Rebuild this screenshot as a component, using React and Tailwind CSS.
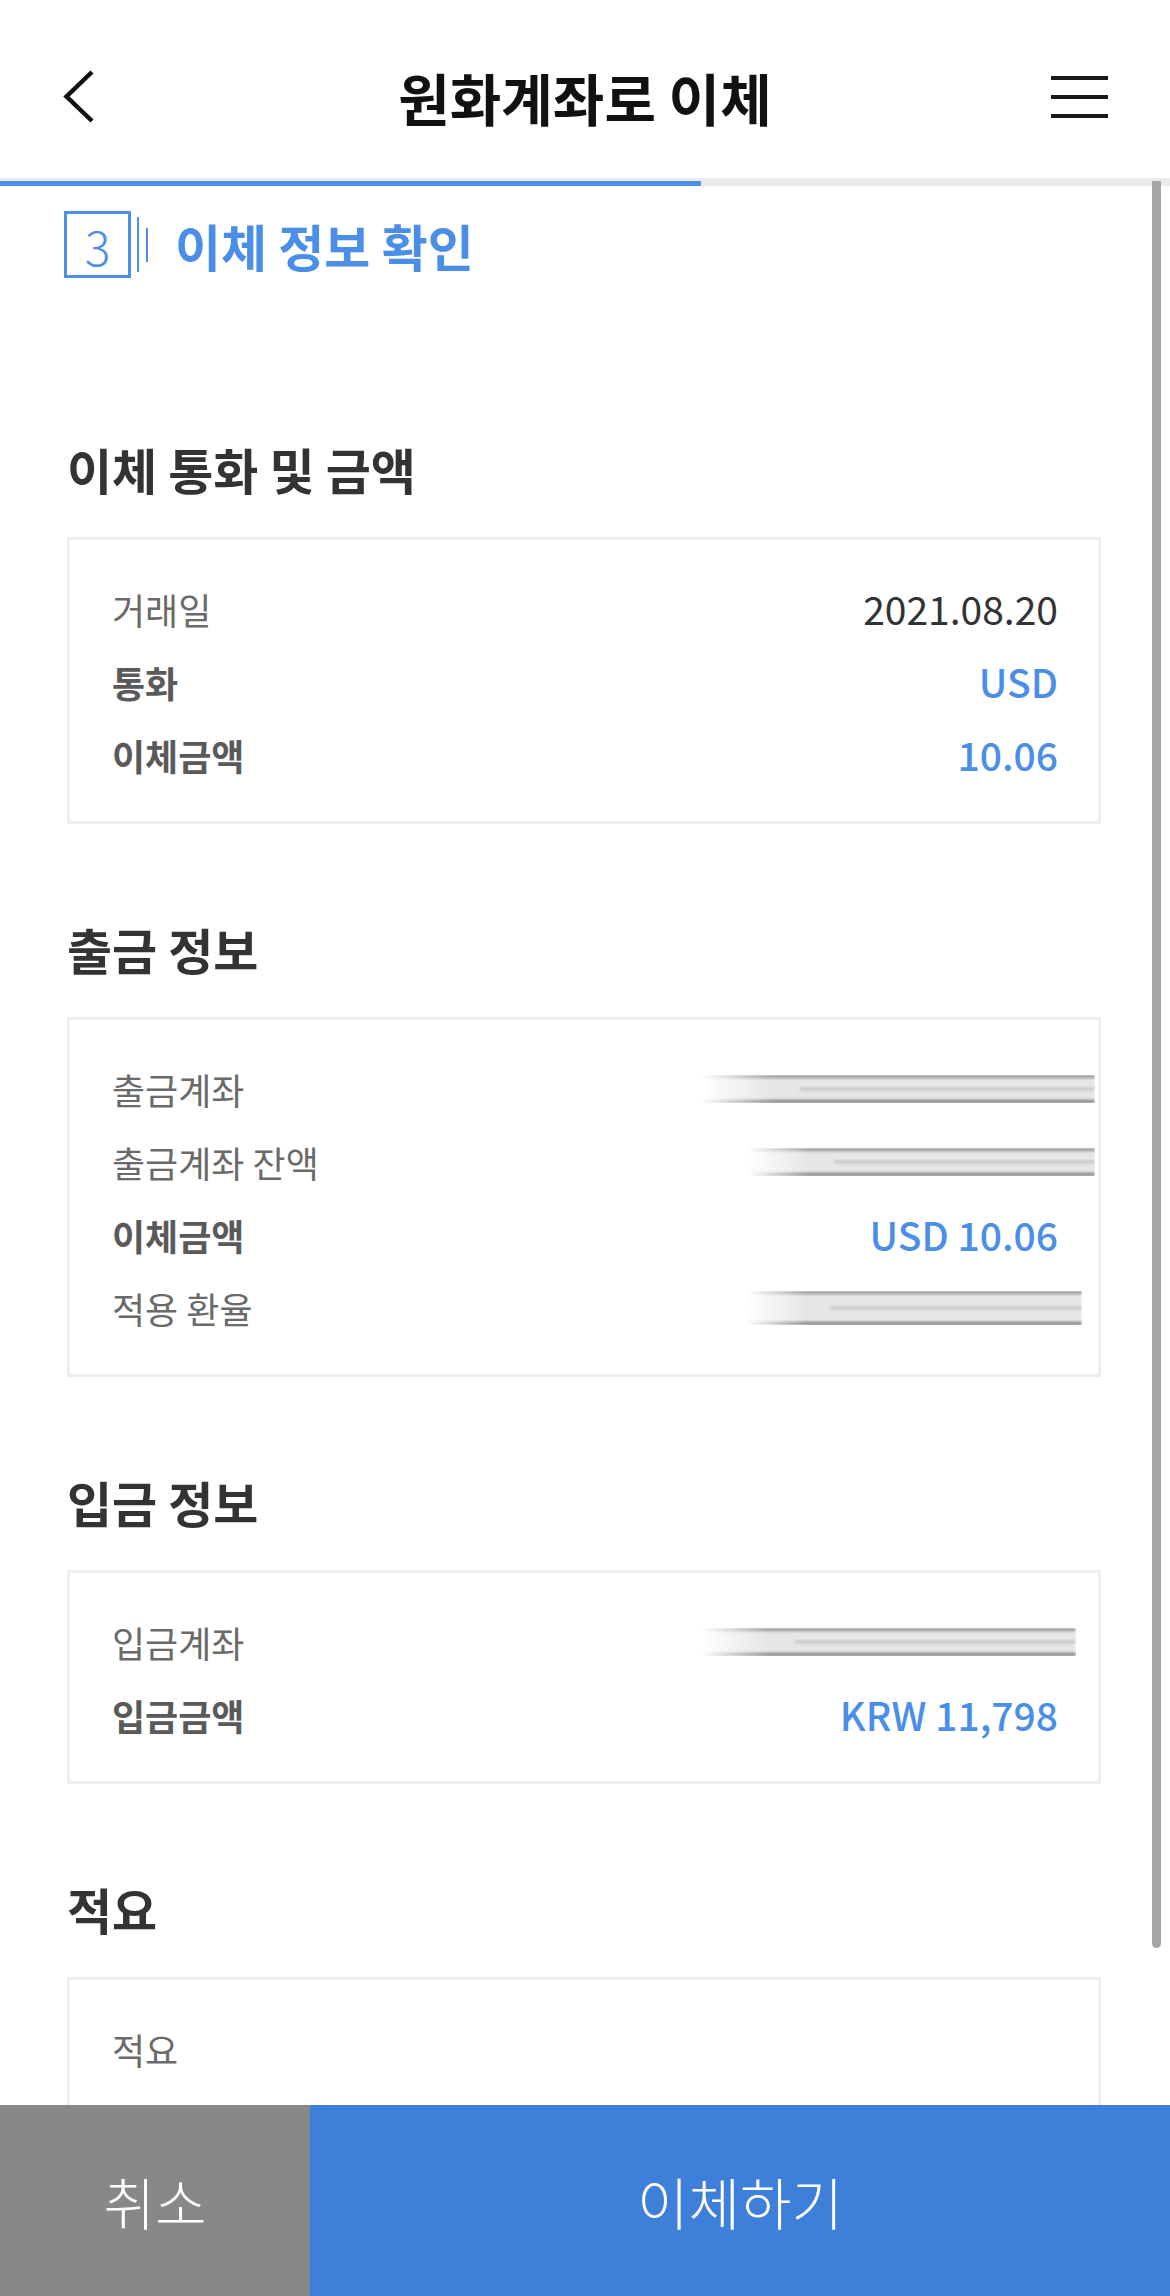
import React from 'react'

const blue = 'text-[#4b8ee8]'

function Blurred({ className }) {
  return (
    <div
      className={
        'h-[28px] flex flex-col justify-between bg-[#e6e6e6] blur-[1.5px] [mask-image:linear-gradient(to_right,transparent,black_18%)] ' +
        className
      }
    >
      <div className="h-[3px] bg-[#8c8c8c]" />
      <div className="h-[2px] w-[75%] self-end bg-[#b5b5b5]" />
      <div className="h-[3px] bg-[#747474]" />
    </div>
  )
}

function Row({ label, strong, children }) {
  return (
    <div className="h-[73px] flex items-center justify-between">
      <span
        className={
          strong
            ? 'text-[36px] font-semibold text-[#5a5a5a] leading-none'
            : 'text-[36px] font-normal text-[#6a6a6a] leading-none'
        }
      >
        {label}
      </span>
      {children}
    </div>
  )
}

function Value({ accent, children }) {
  return (
    <span
      className={
        accent
          ? 'text-[39px] font-medium text-[#4b8ee8] leading-none'
          : 'text-[39px] font-normal text-[#333333] leading-none'
      }
    >
      {children}
    </span>
  )
}

function Card({ children, className = '' }) {
  return (
    <div className={'mt-[38px] border-[3px] border-[#eeeeee] bg-white pl-[42px] pr-[40px] pt-[32px] pb-[30px] ' + className}>
      {children}
    </div>
  )
}

function Heading({ children, className = 'mt-[95px]' }) {
  return <h2 className={'h-[60px] leading-[60px] text-[49px] font-bold text-[#333333] ' + className}>{children}</h2>
}

export default function App() {
  return (
    <div className="relative w-[1170px] h-[2296px] overflow-hidden flex flex-col bg-white font-['Noto_Sans_CJK_KR','Noto_Sans',sans-serif]">
      <header className="h-[178px] pt-[16px] px-[62px] flex items-center justify-between shrink-0">
        <svg width="57" height="56" viewBox="0 0 57 56" fill="none">
          <path d="M30 3 L4.5 27.5 L30 52" stroke="#111111" strokeWidth="4.5" />
        </svg>
        <h1 className="text-[56px] font-bold text-[#111111] leading-none">원화계좌로 이체</h1>
        <div className="w-[57px] h-[42px] flex flex-col justify-between">
          <div className="h-[4px] bg-[#1a1a1a]" />
          <div className="h-[4px] bg-[#1a1a1a]" />
          <div className="h-[4px] bg-[#1a1a1a]" />
        </div>
      </header>

      <div className="h-[8px] bg-[#ebebeb] shrink-0">
        <div className="mt-[3px] h-[5px] w-[701px] bg-[#4d90ea]" />
      </div>

      <main className="flex-1 overflow-hidden pl-[67px] pr-[69px]">
        <div className="mt-[25px] -ml-[3px] h-[67px] flex items-center">
          <div className="w-[67px] h-[67px] border-[3px] border-[#4d90ea] flex items-center justify-center">
            <span className={'text-[48px] font-light leading-none ' + blue}>3</span>
          </div>
          <div className="ml-[6px] w-[2px] h-[55px] bg-[#4d90ea]" />
          <div className="ml-[7px] w-[2px] h-[34px] bg-[#4d90ea]" />
          <span className={'ml-[27px] text-[50px] font-bold leading-none ' + blue}>이체 정보 확인</span>
        </div>

        <Heading className="mt-[161px]">이체 통화 및 금액</Heading>
        <Card>
          <Row label="거래일">
            <Value>2021.08.20</Value>
          </Row>
          <Row label="통화" strong>
            <Value accent>USD</Value>
          </Row>
          <Row label="이체금액" strong>
            <Value accent>10.06</Value>
          </Row>
        </Card>

        <Heading>출금 정보</Heading>
        <Card>
          <Row label="출금계좌">
            <Blurred className="w-[394px] -mr-[37px]" />
          </Row>
          <Row label="출금계좌 잔액">
            <Blurred className="w-[348px] -mr-[37px]" />
          </Row>
          <Row label="이체금액" strong>
            <Value accent>USD 10.06</Value>
          </Row>
          <Row label="적용 환율">
            <Blurred className="w-[336px] -mr-[24px] h-[34px]" />
          </Row>
        </Card>

        <Heading>입금 정보</Heading>
        <Card>
          <Row label="입금계좌">
            <Blurred className="w-[375px] -mr-[18px]" />
          </Row>
          <Row label="입금금액" strong>
            <Value accent>KRW 11,798</Value>
          </Row>
        </Card>

        <Heading>적요</Heading>
        <Card className="h-[260px]">
          <Row label="적요" />
        </Card>
      </main>

      <footer className="h-[191px] flex shrink-0">
        <button className="w-[310px] bg-[#888888] text-white text-[56px] font-light">취소</button>
        <button className="flex-1 bg-[#3d7fd9] text-white text-[56px] font-light">이체하기</button>
      </footer>

      <div className="absolute top-[181px] right-[9px] w-[9px] h-[1767px] rounded-b-full bg-[#a6a6a6]" />
    </div>
  )
}
